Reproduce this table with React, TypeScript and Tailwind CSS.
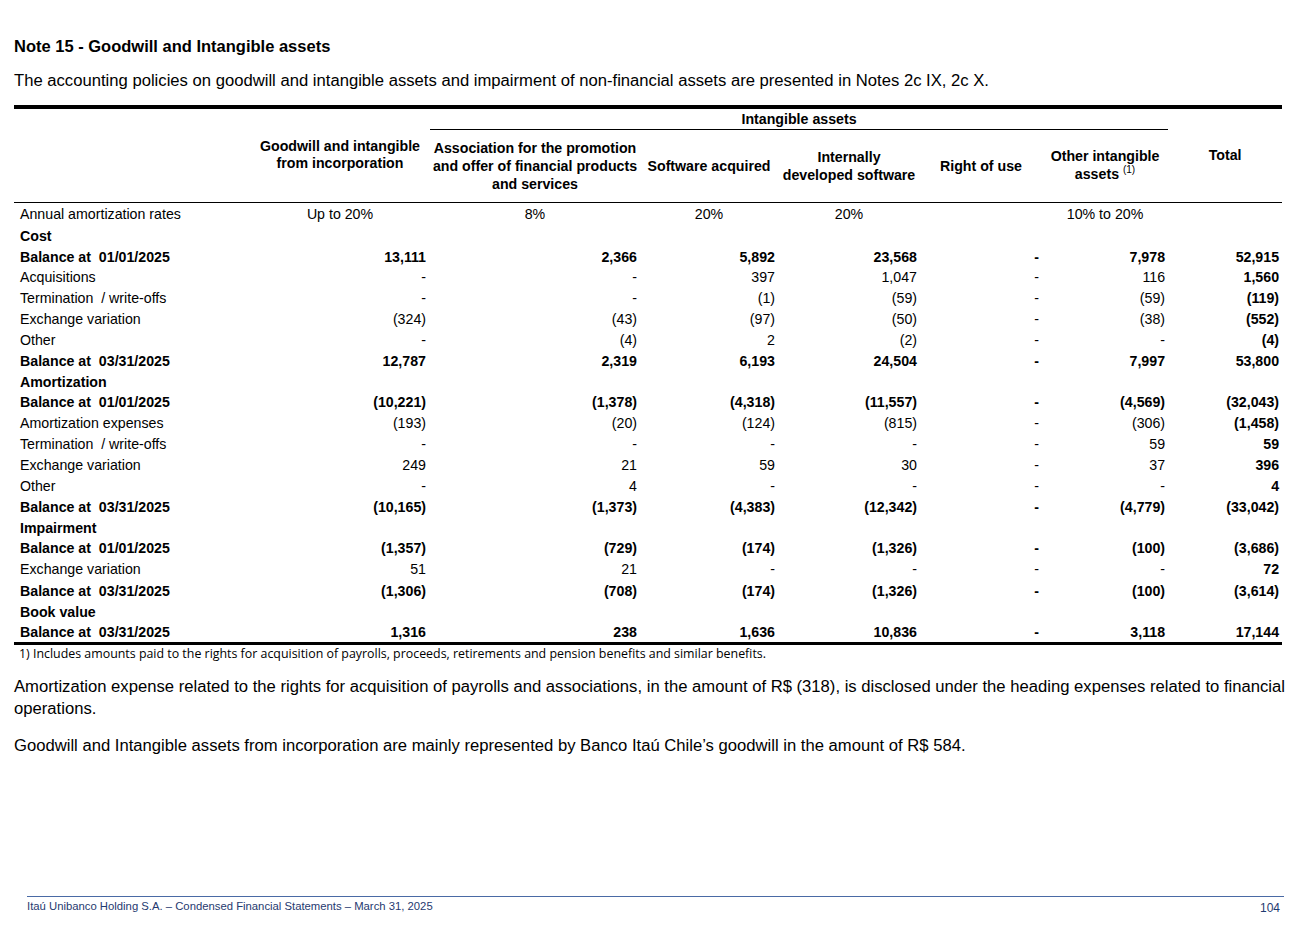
import React from "react";

type Row = {
  label: string;
  kind: "rates" | "section" | "bold" | "normal";
  vals?: string[];
  h: number;
};

const rows: Row[] = [
  { label: "Annual amortization rates", kind: "rates", vals: ["Up to 20%", "8%", "20%", "20%", "", "10% to 20%", ""], h: 22 },
  { label: "Cost", kind: "section", h: 22 },
  { label: "Balance at  01/01/2025", kind: "bold", vals: ["13,111", "2,366", "5,892", "23,568", "-", "7,978", "52,915"], h: 20 },
  { label: "Acquisitions", kind: "normal", vals: ["-", "-", "397", "1,047", "-", "116", "1,560"], h: 21 },
  { label: "Termination  / write-offs", kind: "normal", vals: ["-", "-", "(1)", "(59)", "-", "(59)", "(119)"], h: 21 },
  { label: "Exchange variation", kind: "normal", vals: ["(324)", "(43)", "(97)", "(50)", "-", "(38)", "(552)"], h: 21 },
  { label: "Other", kind: "normal", vals: ["-", "(4)", "2", "(2)", "-", "-", "(4)"], h: 21 },
  { label: "Balance at  03/31/2025", kind: "bold", vals: ["12,787", "2,319", "6,193", "24,504", "-", "7,997", "53,800"], h: 21 },
  { label: "Amortization", kind: "section", h: 20 },
  { label: "Balance at  01/01/2025", kind: "bold", vals: ["(10,221)", "(1,378)", "(4,318)", "(11,557)", "-", "(4,569)", "(32,043)"], h: 21 },
  { label: "Amortization expenses", kind: "normal", vals: ["(193)", "(20)", "(124)", "(815)", "-", "(306)", "(1,458)"], h: 21 },
  { label: "Termination  / write-offs", kind: "normal", vals: ["-", "-", "-", "-", "-", "59", "59"], h: 21 },
  { label: "Exchange variation", kind: "normal", vals: ["249", "21", "59", "30", "-", "37", "396"], h: 21 },
  { label: "Other", kind: "normal", vals: ["-", "4", "-", "-", "-", "-", "4"], h: 21 },
  { label: "Balance at  03/31/2025", kind: "bold", vals: ["(10,165)", "(1,373)", "(4,383)", "(12,342)", "-", "(4,779)", "(33,042)"], h: 21 },
  { label: "Impairment", kind: "section", h: 20 },
  { label: "Balance at  01/01/2025", kind: "bold", vals: ["(1,357)", "(729)", "(174)", "(1,326)", "-", "(100)", "(3,686)"], h: 21 },
  { label: "Exchange variation", kind: "normal", vals: ["51", "21", "-", "-", "-", "-", "72"], h: 21 },
  { label: "Balance at  03/31/2025", kind: "bold", vals: ["(1,306)", "(708)", "(174)", "(1,326)", "-", "(100)", "(3,614)"], h: 22 },
  { label: "Book value", kind: "section", h: 20 },
  { label: "Balance at  03/31/2025", kind: "bold", vals: ["1,316", "238", "1,636", "10,836", "-", "3,118", "17,144"], h: 22 },
];

const colW = [236, 180, 210, 138, 142, 122, 126, 114];

export default function App() {
  return (
    <div
      className="w-[1300px] h-[928px] bg-white text-black flex flex-col"
      style={{ fontFamily: '"Liberation Sans", Arial, sans-serif' }}
    >
      <div className="pl-[14px] pt-[36px]">
        <h1 className="text-[16.5px] font-bold leading-[20px]">Note 15 - Goodwill and Intangible assets</h1>
        <p className="text-[16.65px] leading-[20px] mt-[15px]">
          The accounting policies on goodwill and intangible assets and impairment of non-financial assets are presented in Notes 2c IX, 2c X.
        </p>
        <table className="mt-[14px] border-collapse table-fixed w-[1268px] border-t-[4px] border-b-[3px] border-black text-[14.2px]">
          <colgroup>
            {colW.map((w, i) => (
              <col key={i} style={{ width: w }} />
            ))}
          </colgroup>
          <thead>
            <tr className="h-[22px]">
              <th rowSpan={2} className="border-b border-black"></th>
              <th rowSpan={2} className="border-b border-black font-bold text-center align-middle leading-[17px] px-0">
                Goodwill and intangible
                <br />
                from incorporation
              </th>
              <th colSpan={5} className="border-b border-black font-bold text-center leading-[16px] pt-[1px]">
                Intangible assets
              </th>
              <th rowSpan={2} className="border-b border-black font-bold text-center align-middle">
                Total
              </th>
            </tr>
            <tr className="h-[73px]">
              <th className="border-b border-black font-bold text-center leading-[18px] px-0">
                Association for the promotion
                <br />
                and offer of financial products
                <br />
                and services
              </th>
              <th className="border-b border-black font-bold text-center leading-[18px] px-0">Software acquired</th>
              <th className="border-b border-black font-bold text-center leading-[18px]">
                Internally
                <br />
                developed software
              </th>
              <th className="border-b border-black font-bold text-center leading-[18px]">Right of use</th>
              <th className="border-b border-black font-bold text-center leading-[18px]">
                Other intangible
                <br />
                assets <span className="text-[10px] font-normal relative -top-[6px]">(1)</span>
              </th>
            </tr>
          </thead>
          <tbody>
            {rows.map((r, i) => (
              <tr key={i} style={{ height: r.h }}>
                <td
                  className={`pl-[6px] pt-[2px] whitespace-pre leading-[15px] ${
                    r.kind === "section" || r.kind === "bold" ? "font-bold" : ""
                  }`}
                >
                  {r.label}
                </td>
                {r.vals
                  ? r.vals.map((v, j) => (
                      <td
                        key={j}
                        className={`leading-[15px] pt-[2px] ${
                          r.kind === "rates" ? "text-center" : j === 0 ? "text-right pr-[4px]" : "text-right pr-[3px]"
                        } ${r.kind === "bold" || (j === 6 && r.kind !== "rates") ? "font-bold" : ""}`}
                      >
                        {v}
                      </td>
                    ))
                  : Array.from({ length: 7 }).map((_, j) => <td key={j}></td>)}
              </tr>
            ))}
          </tbody>
        </table>
        <p
          className="text-[12.4px] leading-[16px] pl-[5px] pt-[1px]"
          style={{ fontFamily: '"Open Sans", "Noto Sans", sans-serif' }}
        >
          1) Includes amounts paid to the rights for acquisition of payrolls, proceeds, retirements and pension benefits and similar benefits.
        </p>
        <p className="text-[16.65px] leading-[22px] mt-[14px] w-[1285px]">
          Amortization expense related to the rights for acquisition of payrolls and associations, in the amount of R$ (318), is disclosed under the heading expenses related to financial operations.
        </p>
        <p className="text-[16.65px] leading-[22px] mt-[15px]">
          Goodwill and Intangible assets from incorporation are mainly represented by Banco Itaú Chile’s goodwill in the amount of R$ 584.
        </p>
      </div>
      <div className="mt-auto mb-[12px] ml-[27px] mr-[16px] border-t border-[#4a6aa5] flex justify-between items-start pt-[2px]">
        <span className="text-[11.3px] leading-[14px] text-[#1f3a70]">
          Itaú Unibanco Holding S.A. – Condensed Financial Statements – March 31, 2025
        </span>
        <span className="text-[12px] leading-[16px] text-[#1f3a70] pr-[4px] pt-[1px]">104</span>
      </div>
    </div>
  );
}
